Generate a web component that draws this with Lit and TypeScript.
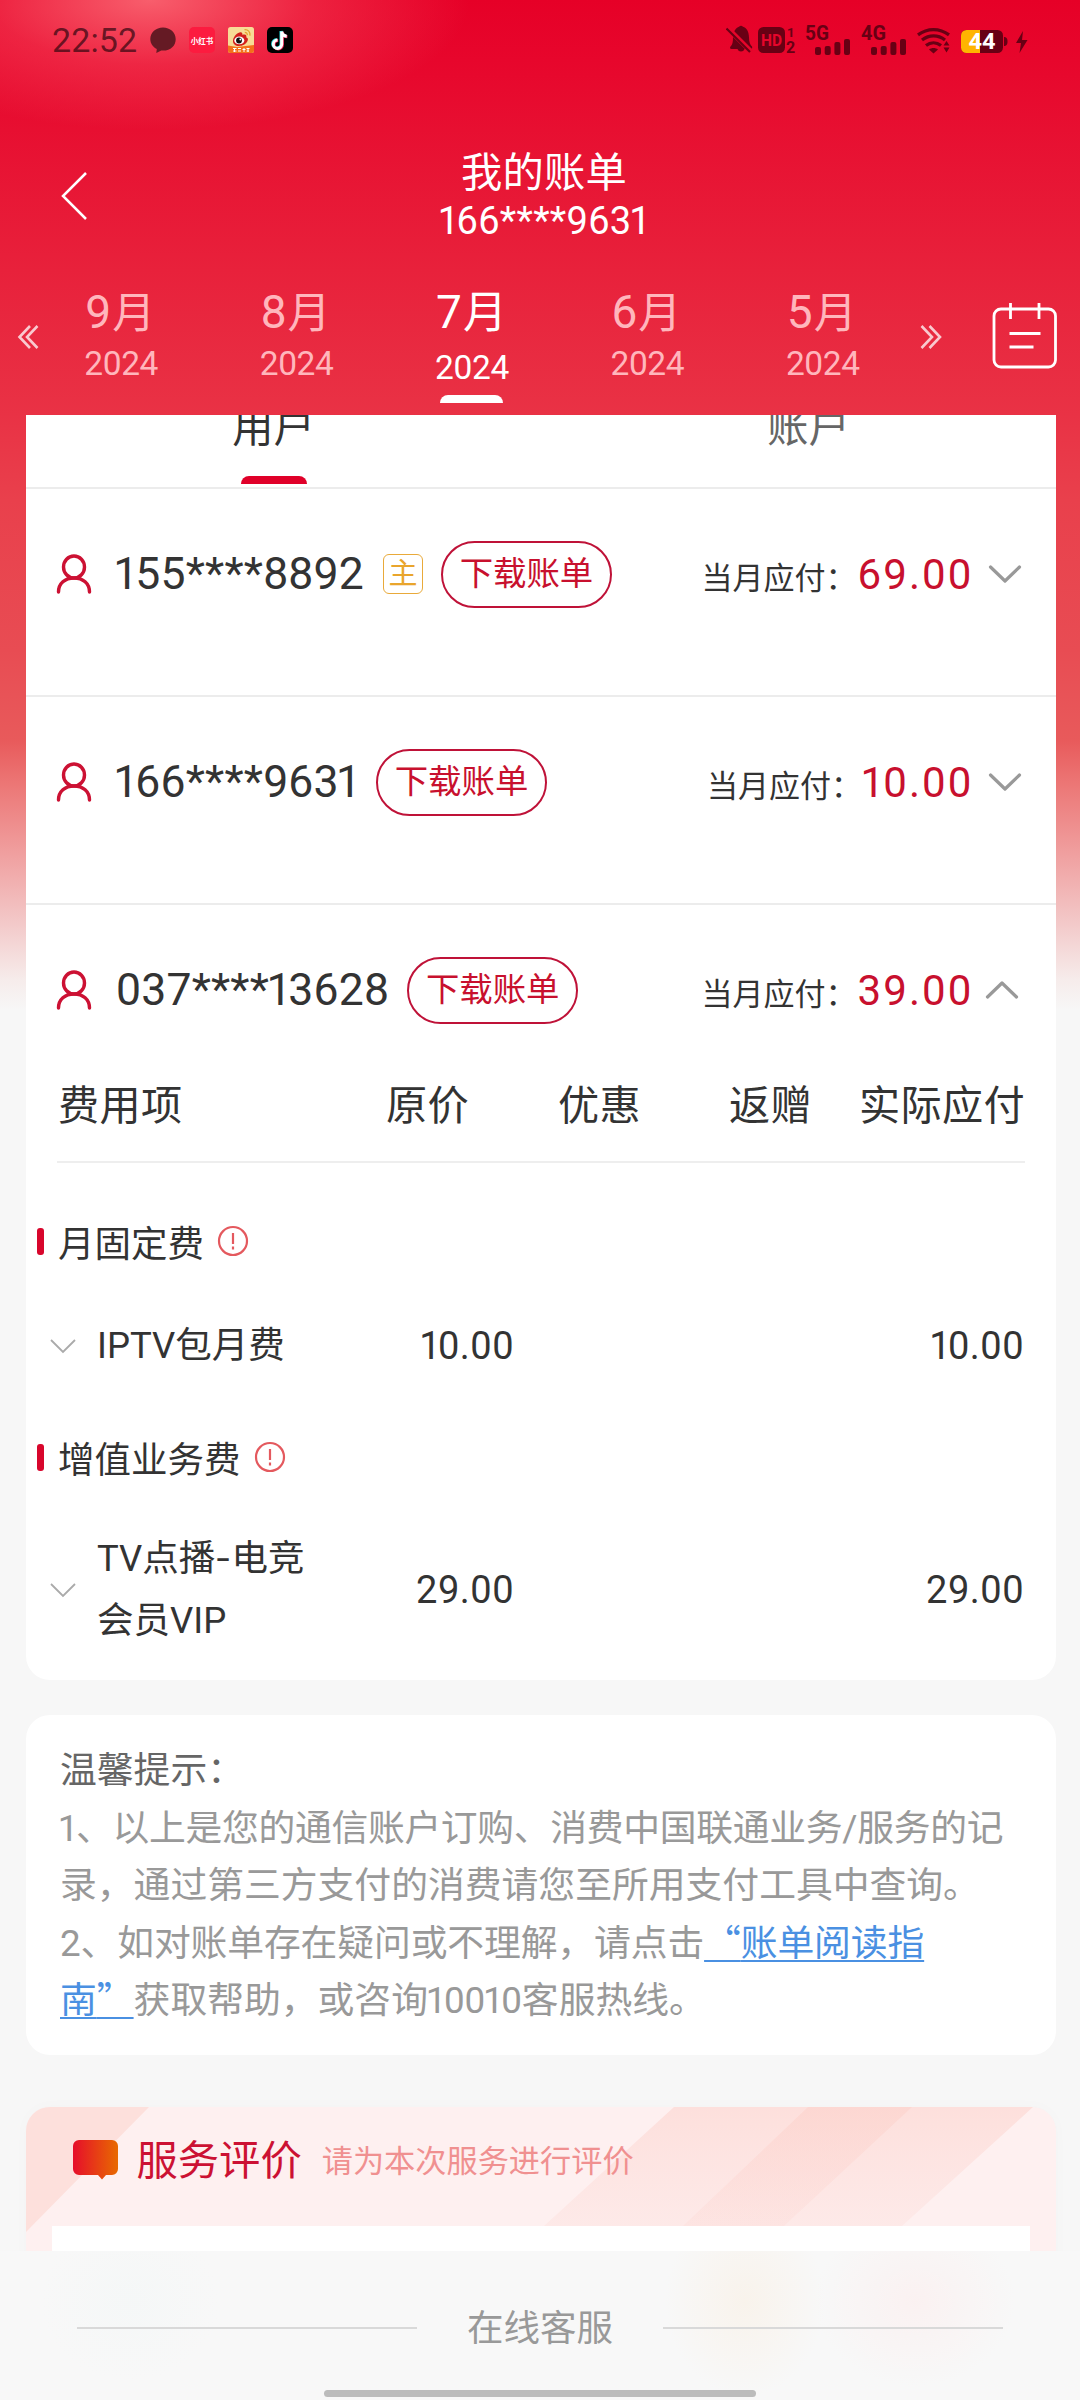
import { LitElement, html, css, svg } from "lit";
import { customElement, property } from "lit/decorators.js";
import { classMap } from "lit/directives/class-map.js";

const FONT = css`"Roboto", "Noto Sans CJK SC", sans-serif`;

/* The figure 1 is proportional: it takes less room than the other digits. */
const ONE = css`
  .n1 { letter-spacing: -0.07em; margin-left: -0.06em; }
`;
const digits = (text: string) =>
  text.split(/(1)/).filter((t) => t !== "").map((t) => (t === "1" ? html`<span class="n1">1</span>` : t));

@customElement("status-bar")
class StatusBar extends LitElement {
  static styles = css`
    :host { display: block; height: 80px; font-family: ${FONT}; }
    .bar { display: flex; align-items: flex-start; height: 80px; padding: 0 42px 0 52px; color: rgba(55, 8, 18, 0.74); }
    .time { width: 98px; font-size: 34px; line-height: 81px; letter-spacing: 0.1px; white-space: nowrap; }
    .apps { display: flex; gap: 13px; padding-top: 27px; }
    svg { display: block; }
    .sys { margin-left: auto; margin-top: 15px; }
  `;

  bars(x: number) {
    return svg`
      <rect x=${x} y="32" width="6" height="8" rx="2"/>
      <rect x=${x + 9.7} y="31" width="6" height="9" rx="2"/>
      <rect x=${x + 19.4} y="27" width="6" height="13" rx="2"/>
      <rect x=${x + 29} y="24" width="6" height="16" rx="2"/>`;
  }

  render() {
    return html`
      <div class="bar">
        <div class="time">22:52</div>
        <div class="apps">
          <svg width="26" height="26" viewBox="0 0 26 26">
            <path fill="#651a24" d="M13 .5C5.900.5.3 5.600.3 12c0 4.400 2.600 8 6.500 10l-.500 4 5-2.500c8.800.8 14.400-4.500 14.400-11.300C25.700 5.600 20.100.5 13 .5Z"/>
          </svg>
          <svg width="26" height="26" viewBox="0 0 26 26">
            <rect width="26" height="26" rx="5" fill="#fc1b3f"/>
            <text x="13" y="16.500" text-anchor="middle" font-size="7.500" font-weight="700" fill="#fff">小红书</text>
          </svg>
          <svg width="26" height="26" viewBox="0 0 26 26">
            <rect width="26" height="26" rx="2.500" fill="#f8dc96"/>
            <path d="M0 18.500 9 20l17-2v5.500a2.500 2.500 0 0 1-2.500 2.500h-21A2.500 2.500 0 0 1 0 23.500Z" fill="#f4701b"/>
            <path d="M5 13.500C5.500 9 10.500 4.500 13.500 5.500c1 .4 1 1.500.7 2.300C18 6.500 19 8.500 18.200 10.200c2 .6 2 2.300 1.400 3.600C18.300 17.300 14 19 11 19c-3.500 0-6.400-2-6-5.500Z" fill="#d3201c"/>
            <ellipse cx="11.300" cy="13.400" rx="5" ry="3.900" fill="#fff"/>
            <circle cx="11" cy="13.500" r="2.900" fill="#111"/>
            <circle cx="12.300" cy="12.500" r=".9" fill="#fff"/>
            <path d="M16.500 2.600c3.500-.3 6 2.400 5.400 6M16.800 5.300c1.600 0 2.700 1.200 2.500 2.800" fill="none" stroke="#e3a22b" stroke-width="1.300"/>
            <path d="M5 21.500h3.500M5 24h3.500M10 21.500h3M10 24h3M14.500 22.500h3M18.500 21.500h3M18.500 24h2.500M6.500 21v4M16 21v4M20 21v4" stroke="#fff" stroke-width="1"/>
          </svg>
          <svg width="26" height="26" viewBox="0 0 26 26">
            <rect width="26" height="26" rx="5" fill="#000"/>
            <g fill="none" stroke-width="3">
              <path stroke="#25d9dc" d="M14 4v12.700a4.200 4.200 0 1 1-4.200-4.200M14 4c.3 3 2 4.500 5 4.800"/>
              <path stroke="#f5295a" d="M15.400 5v12.700a4.200 4.200 0 1 1-4.200-4.200M15.400 5c.3 3 2 4.500 5 4.800"/>
              <path stroke="#fff" d="M14.700 4.500v12.700a4.200 4.200 0 1 1-4.200-4.200M14.700 4.500c.3 3 2 4.500 5 4.800"/>
            </g>
          </svg>
        </div>
        <svg class="sys" width="312" height="50" viewBox="0 0 312 50" fill="#680014" font-weight="700">
          <g>
            <path d="M4.500 31.500c2-2 2.500-4.500 2.500-9 0-6 3-10 6-10.800a3 3 0 0 1 4 0c3.500 1 6 5 6 10.800 0 4.500 1 7 3 9 .6 1.300 0 2.500-1.500 2.500h-6a3.700 3.700 0 0 1-7 0H5.500c-1.500 0-1.800-1.500-1-2.500Z"/>
            <path d="M1 12.500 25 36.500" stroke="#e6052b" stroke-width="5"/>
            <path d="M.5 13.500 24 37" stroke="#680014" stroke-width="2.200"/>
          </g>
          <g>
            <rect x="32" y="12" width="27" height="26" rx="5.500"/>
            <text x="45.500" y="30.500" text-anchor="middle" font-size="16" textLength="21" lengthAdjust="spacingAndGlyphs" fill="#e6052b">HD</text>
            <text x="61" y="22" font-size="13">1</text>
            <text x="60" y="37.500" font-size="16">2</text>
          </g>
          <text x="79" y="25" font-size="20.500" textLength="24" lengthAdjust="spacingAndGlyphs">5G</text>
          ${this.bars(89)}
          <text x="135" y="25" font-size="20.500" textLength="25" lengthAdjust="spacingAndGlyphs">4G</text>
          ${this.bars(145)}
          <g fill="none" stroke="#680014" stroke-width="3.300">
            <path d="M192 19.800c9.500-7 21.500-7 31 0"/>
            <path d="M196 25c7.200-5.500 16-5.500 23 0"/>
            <path d="M200 30.500c4.500-3.500 10.500-3.500 15 0"/>
          </g>
          <path d="M203 34.500c2.500-2 6.500-2 9 0l-4.500 4Z"/>
          <path d="M217.500 30.500l3-4.500 3 4.500ZM217.500 32.500h6l-3 5Z"/>
          <rect x="235" y="15" width="42" height="23" rx="5.500"/>
          <path d="M278 22c2 0 3.500 1 3.500 4.500S280 31 278 31Z"/>
          <path d="M240.500 15H254v23h-13.500a5.500 5.500 0 0 1-5.500-5.500v-12a5.500 5.500 0 0 1 5.500-5.500Z" fill="#ffb400"/>
          <text x="256" y="34.300" text-anchor="middle" font-size="21.500" textLength="27" lengthAdjust="spacingAndGlyphs" fill="#fff">44</text>
          <path d="M297 16 290 28h5l-1.500 10L301.500 25H296Z"/>
        </svg>
      </div>
    `;
  }
}

interface Month { month: string; year: string; active?: boolean; }

@customElement("bill-header")
class BillHeader extends LitElement {
  static styles = [ONE, css`
    :host { display: block; height: 335px; font-family: ${FONT}; color: #fff; }
    svg { display: block; fill: none; stroke: currentColor; }
    .nav { display: grid; grid-template-columns: 120px 1fr 120px; height: 190px; }
    .back { padding: 91px 0 0 60px; }
    .titles { text-align: center; padding: 66px 0 0 8px; }
    .title { font-size: 41.300px; line-height: 54px; height: 54px; letter-spacing: 0.2px; }
    .phone { font-size: 38px; line-height: 43px; letter-spacing: 0.300px; }
    .months { display: flex; height: 145px; }
    .prev { width: 33.500px; padding: 54px 0 0 17px; box-sizing: border-box; opacity: 0.75; }
    .month { width: 175.400px; text-align: center; color: #ffb6bc; }
    .m { font-size: 43px; line-height: 52px; margin-top: 16px; padding-right: 2px; }
    .m .num { font-size: 46px; margin-right: 1px; }
    .y { font-size: 33.500px; line-height: 40px; margin-top: 5px; letter-spacing: -0.4px; }
    .active { color: #fff; }
    .active .m { font-size: 44px; padding-right: 1px; }
    .active .m .num { font-size: 46px; }
    .active .y { margin-top: 9px; }
    .line { width: 63px; height: 8px; margin: 7px auto 0; background: #fff; border-radius: 8px 8px 0 0; }
    .next { padding: 54px 0 0 9px; opacity: 0.75; width: 82px; box-sizing: border-box; }
    .cal { padding-top: 32px; }
  `];

  months: Month[] = [
    { month: "9", year: "2024" },
    { month: "8", year: "2024" },
    { month: "7", year: "2024", active: true },
    { month: "6", year: "2024" },
    { month: "5", year: "2024" },
  ];

  render() {
    return html`
      <div class="nav">
        <div class="back">
          <svg width="28" height="50" viewBox="0 0 28 50" stroke-width="2.500"><path d="M26 2 3 25 26 48"/></svg>
        </div>
        <div class="titles">
          <div class="title">我的账单</div>
          <div class="phone">${digits("166****9631")}</div>
        </div>
      </div>
      <div class="months">
        <div class="prev">
          <svg width="24" height="26" viewBox="0 0 24 26" stroke-width="2.600"><path d="M13 2 2.500 13 13 24M20.500 2 10 13l10.500 11"/></svg>
        </div>
        ${this.months.map((m) => html`
          <div class=${classMap({ month: true, active: !!m.active })}>
            <div class="m"><span class="num">${m.month}</span>月</div>
            <div class="y">${m.year}</div>
            ${m.active ? html`<div class="line"></div>` : ""}
          </div>`)}
        <div class="next">
          <svg width="24" height="26" viewBox="0 0 24 26" stroke-width="2.600"><path d="M2.500 2 13 13 2.500 24M10.500 2 21 13 10.500 24"/></svg>
        </div>
        <div class="cal">
          <svg width="66" height="68" viewBox="0 0 66 68" stroke-width="2.800">
            <rect x="2" y="7" width="61.500" height="58" rx="7"/>
            <path d="M18.500 1v16M47 1v16M17.500 31.500h31M17.500 45h24"/>
          </svg>
        </div>
      </div>
    `;
  }
}

@customElement("account-row")
class AccountRow extends LitElement {
  @property() phone = "";
  @property() amount = "";
  @property({ type: Boolean }) primary = false;
  @property({ type: Boolean }) open = false;

  static styles = [ONE, css`
    :host { display: block; font-family: ${FONT}; }
    .row { display: flex; align-items: center; height: 66px; padding: 52px 34px 0 29px; }
    svg { display: block; fill: none; }
    .phone { margin-left: 21px; font-size: 44.500px; line-height: 66px; color: #333; letter-spacing: 0.2px; }
    .badge { width: 38px; height: 38px; margin-left: 19px; border: 1.500px solid #e9aa3a; border-radius: 6px; color: #e9a52c; font-size: 29px; line-height: 38px; text-align: center; }
    .pill { box-sizing: border-box; width: 171px; height: 67px; margin-left: 18px; border: 2px solid #bf1238; border-radius: 34px; color: #c8102e; font-size: 33.400px; line-height: 62px; text-align: center; white-space: nowrap; }
    .label { margin-left: auto; font-size: 31px; color: #333; padding-top: 3px; }
    .amount { font-size: 42px; letter-spacing: 2.100px; color: #c8102e; margin: 0 14.500px 0 1px; }
    .amount .n1 { letter-spacing: -1px; }
    .open { margin-right: 3px; margin-left: -3px; }
  `];

  render() {
    return html`
      <div class="row">
        <svg width="40" height="40" viewBox="0 0 40 40" stroke="#cc1133" stroke-width="3.400" stroke-linecap="round">
          <ellipse cx="19" cy="13" rx="10.500" ry="11"/>
          <path d="M3.500 38C3.500 29.500 10 24 19 24s15.500 5.500 15.500 14"/>
        </svg>
        <div class="phone">${digits(this.phone)}</div>
        ${this.primary ? html`<div class="badge">主</div>` : ""}
        <div class="pill">下载账单</div>
        <div class="label">当月应付：</div>
        <div class="amount">${digits(this.amount)}</div>
        <svg class=${classMap({ open: this.open })} width="34" height="22" viewBox="0 0 34 22" stroke="#999" stroke-width="3.200" stroke-linecap="round" stroke-linejoin="round">
          <path d=${this.open ? "M2.500 18 17 4l14.500 14" : "M2.500 4 17 18 31.500 4"}/>
        </svg>
      </div>
    `;
  }
}

interface FeeGroup { title: string; name: string[]; price: string; due: string; }

@customElement("fee-table")
class FeeTable extends LitElement {
  static styles = [ONE, css`
    :host { display: block; font-family: ${FONT}; color: #333; }
    svg { display: block; fill: none; }
    .head { display: grid; grid-template-columns: 328px 172px 171px 1fr auto; height: 111px; line-height: 112px; margin: 0 31px; border-bottom: 2px solid #eee; font-size: 41.200px; letter-spacing: 0.3px; padding-left: 1px; white-space: nowrap; }
    .group { display: flex; align-items: center; height: 60px; padding-left: 11px; font-size: 36.500px; }
    .tick { width: 7px; height: 27px; border-radius: 3px; background: #d8062c; margin-right: 14px; }
    .group svg { margin-left: 13px; }
    .item { display: grid; grid-template-columns: 48px 271px 146px 1fr; align-items: center; padding: 0 32px 0 23px; font-size: 36.500px; line-height: 62px; }
    .price { font-size: 38px; text-align: right; letter-spacing: 0.500px; }
    .body { padding-top: 48px; }
    .one { height: 150px; margin-bottom: 6px; }
    .two { height: 206px; }
    .name { white-space: nowrap; }
    .dash { display: inline-block; transform: scaleX(1.3); margin: 0 3px; }
  `];

  groups: FeeGroup[] = [
    { title: "月固定费", name: ["IPTV包月费"], price: "10.00", due: "10.00" },
    { title: "增值业务费", name: ["TV点播-电竞", "会员VIP"], price: "29.00", due: "29.00" },
  ];

  line(text: string) {
    return text.split(/(-)/).map((t) => (t === "-" ? html`<span class="dash">-</span>` : t));
  }

  render() {
    return html`
      <div class="head"><span>费用项</span><span>原价</span><span>优惠</span><span>返赠</span><span>实际应付</span></div>
      <div class="body">
        ${this.groups.map((g) => html`
          <div class="group">
            <div class="tick"></div>${g.title}
            <svg width="32" height="32" viewBox="0 0 32 32" stroke="#e4595e" stroke-width="2.200">
              <circle cx="16" cy="16" r="14"/><path d="M16 8v11M16 21.500v3"/>
            </svg>
          </div>
          <div class=${classMap({ item: true, one: g.name.length === 1, two: g.name.length > 1 })}>
            <svg width="28" height="18" viewBox="0 0 28 18" stroke="#aaa" stroke-width="1.800"><path d="M2 3 14 15 26 3"/></svg>
            <div class="name">${g.name.map((n) => html`<div>${this.line(n)}</div>`)}</div>
            <div class="price">${digits(g.price)}</div>
            <div class="price">${digits(g.due)}</div>
          </div>`)}
      </div>
    `;
  }
}

@customElement("app-root")
class AppRoot extends LitElement {
  static styles = [ONE, css`
    :host { display: block; font-family: ${FONT}; }
    .screen {
      position: relative; width: 1080px; height: 2400px; overflow: hidden;
      background:
        radial-gradient(ellipse 320px 130px at 150px 0, rgba(255, 130, 135, 0.72), rgba(255, 110, 120, 0.3) 50%, rgba(255, 110, 120, 0) 100%),
        linear-gradient(180deg, #e60027 0, #e7062c 60px, #e8213b 270px, #e93245 415px, #e9404c 500px, #e84c53 650px, #e85a5b 740px, #ec7776 785px, #f0a0a0 855px, #f3caca 925px, #f6eceb 980px, #f7f7f7 1010px);
    }
    .card { margin: 0 24px 0 26px; background: #fff; }
    .bill { height: 1265px; border-radius: 0 0 24px 24px; overflow: hidden; }
    .tabs { display: flex; justify-content: space-between; height: 72px; border-bottom: 2px solid #ececec; }
    .tab { width: 495px; text-align: center; color: #666; font-size: 41.200px; line-height: 50px; margin-top: -12px; }
    .tab.on { color: #333; }
    .tab .mark { width: 66px; height: 8px; margin: 23px auto 0; background: #e00029; border-radius: 8px 8px 0 0; }
    .account { height: 206px; border-bottom: 2px solid #ececec; }
    .account.expanded { height: 145px; border: 0; }
    .tips { margin-top: 35px; height: 340px; box-sizing: border-box; border-radius: 24px; padding: 27px 30px 0 34px; font-size: 36.800px; line-height: 57.600px; color: #999; white-space: nowrap; }
    .tips .lead { color: #666; }
    .tips .tight { letter-spacing: -0.3px; }
    .tips .snug { letter-spacing: -0.12px; }
    .tips .cjk { font-family: "Noto Sans CJK SC", sans-serif; line-height: 0; }
    .tips a { color: #4a90e2; text-decoration: underline; text-decoration-thickness: 2px; text-underline-offset: 4px; text-decoration-skip-ink: none; }
    .service { margin-top: 52px; height: 170px; border-radius: 24px 24px 0 0; background: #fef0f0; overflow: hidden; display: grid; box-shadow: 0 0 16px rgba(0, 0, 0, 0.02); }
    .service > * { grid-area: 1 / 1; }
    .service svg { display: block; }
    .svc { display: flex; flex-direction: column; padding: 0 26px; }
    .svc-head { display: flex; align-items: center; height: 119px; padding-left: 21px; box-sizing: border-box; }
    .svc-title { color: #cc1133; font-size: 41.300px; line-height: 50px; margin: -12px 0 0 17.500px; }
    .svc-sub { color: #f09090; font-size: 31.200px; line-height: 50px; margin: -9px 0 0 20px; }
    .svc-head svg { margin-top: -13px; }
    .svc-body { flex: 1; background: #fff; }
    .dock {
      position: absolute; left: 0; right: 0; bottom: 0; height: 149px;
      display: flex; flex-direction: column; align-items: center;
      background:
        radial-gradient(ellipse 80px 95px at 745px 50px, rgba(250, 228, 200, 0.26), rgba(250, 232, 210, 0)),
        radial-gradient(ellipse 100px 85px at 915px 50px, rgba(255, 228, 228, 0.34), rgba(255, 232, 232, 0)),
        radial-gradient(ellipse 90px 80px at 130px 50px, rgba(240, 246, 246, 0.4), rgba(244, 248, 248, 0)),
        #f8f8f8;
    }
    .contact { display: flex; align-items: center; height: 139px; padding-top: 14px; box-sizing: border-box; gap: 50px; color: #999; font-size: 36.500px; }
    .contact .label { margin-top: -5px; }
    .rule { width: 340px; height: 2px; background: #d9d9d9; }
    .home { width: 432px; height: 7px; border-radius: 4px; background: #bcbcbc; }
  `];

  render() {
    return html`
      <div class="screen">
        <status-bar></status-bar>
        <bill-header></bill-header>
        <div class="card bill">
          <div class="tabs">
            <div class="tab on">用户<div class="mark"></div></div>
            <div class="tab">账户</div>
          </div>
          <div class="account"><account-row phone="155****8892" amount="69.00" primary></account-row></div>
          <div class="account"><account-row phone="166****9631" amount="10.00"></account-row></div>
          <div class="account expanded"><account-row phone="037****13628" amount="39.00" open></account-row></div>
          <fee-table></fee-table>
        </div>
        <div class="card tips">
          <div class="lead">温馨提示：</div>
          <div class="tight">${digits("1、以上是您的通信账户订购、消费中国联通业务/服务的记")}</div>
          <div>录，通过第三方支付的消费请您至所用支付工具中查询。</div>
          <div class="snug">2、如对账单存在疑问或不理解，请点击<a><span class="cjk">“</span>账单阅读指</a></div>
          <div><a>南<span class="cjk">”</span></a>${digits("获取帮助，或咨询10010客服热线。")}</div>
        </div>
        <div class="card service">
          <svg width="1030" height="170" viewBox="0 0 1030 170">
            <defs>
              <linearGradient id="fade" x1="0" y1="0" x2="0" y2="1">
                <stop offset="0" stop-color="#fccfc8" stop-opacity=".5"/>
                <stop offset="1" stop-color="#fcd5d0" stop-opacity=".25"/>
              </linearGradient>
            </defs>
            <path d="M0 0h123L0 125Z" fill="#fde0dc"/>
            <path d="M648 0h238L758 119H518Z" fill="url(#fade)"/>
            <path d="M782 0h225L876 119H657Z" fill="url(#fade)"/>
          </svg>
          <div class="svc">
            <div class="svc-head">
              <svg width="46" height="40" viewBox="0 0 46 40">
                <defs>
                  <linearGradient id="bubble" x1="0" y1="0" x2="1" y2="0">
                    <stop offset="0" stop-color="#e60e2b"/><stop offset="1" stop-color="#e86a00"/>
                  </linearGradient>
                </defs>
                <path fill="url(#bubble)" d="M6 0h33a6 6 0 0 1 6 6v23a6 6 0 0 1-6 6h-6l-4 4.500-4-4.500H6a6 6 0 0 1-6-6V6a6 6 0 0 1 6-6Z"/>
              </svg>
              <div class="svc-title">服务评价</div>
              <div class="svc-sub">请为本次服务进行评价</div>
            </div>
            <div class="svc-body"></div>
          </div>
        </div>
        <div class="dock">
          <div class="contact"><div class="rule"></div><div class="label">在线客服</div><div class="rule"></div></div>
          <div class="home"></div>
        </div>
      </div>
    `;
  }
}
